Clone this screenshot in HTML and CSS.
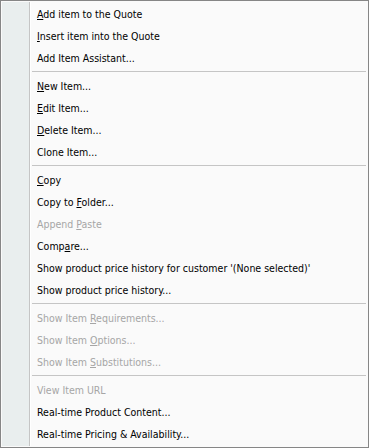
FILE: index.html
```html
<!DOCTYPE html>
<html lang="en">
<head>
  <meta charset="UTF-8">
  <title>Item menu</title>
  <link rel="stylesheet" href="styles.css">
</head>
<body>
  <div class="menu">
    <div class="gutter"></div>
    <div class="items">
      <div class="item"><u>A</u>dd item to the Quote</div>
      <div class="item"><u>I</u>nsert item into the Quote</div>
      <div class="item">Add Item Assistant...</div>
      <div class="sep"></div>
      <div class="item"><u>N</u>ew Item...</div>
      <div class="item"><u>E</u>dit Item...</div>
      <div class="item"><u>D</u>elete Item...</div>
      <div class="item">Clone Item...</div>
      <div class="sep"></div>
      <div class="item"><u>C</u>opy</div>
      <div class="item">Copy to <u>F</u>older...</div>
      <div class="item disabled">Append <u>P</u>aste</div>
      <div class="item">Comp<u>a</u>re...</div>
      <div class="item">Show product price history for customer '(None selected)'</div>
      <div class="item">Show product price history...</div>
      <div class="sep"></div>
      <div class="item disabled">Show Item <u>R</u>equirements...</div>
      <div class="item disabled">Show Item <u>O</u>ptions...</div>
      <div class="item disabled">Show Item <u>S</u>ubstitutions...</div>
      <div class="sep"></div>
      <div class="item disabled">View Item URL</div>
      <div class="item">Real-time Product Content...</div>
      <div class="item">Real-time Pricing &amp; Availability...</div>
    </div>
  </div>
</body>
</html>
```

FILE: styles.css
```css
* {
  box-sizing: border-box;
}

body {
  margin: 0;
  font-family: 'DejaVu Sans Condensed', 'DejaVu Sans', sans-serif;
  font-size: 10.5px;
  color: #000;
}

.menu {
  display: flex;
  width: 369px;
  height: 448px;
  padding: 1px;
  border: 1px solid #868686;
  background: #fafafa;
}

.gutter {
  width: 28px;
  background: #e9eeee;
  border-right: 1px solid #c5c5c5;
  box-shadow: 1px 0 0 #fff;
}

.items {
  flex: 1;
  padding: 1px;
  margin-left: 1px;
}

.item {
  height: 22px;
  padding-top: 1px;
  line-height: 21px;
  padding-left: 5px;
  white-space: nowrap;
}

.item u {
  text-underline-offset: 1px;
}

.disabled {
  color: #a6a6a6;
}

.sep {
  height: 6px;
  padding-top: 2px;
}

.sep::after {
  content: "";
  display: block;
  height: 1px;
  background: #c5c5c5;
}
```
